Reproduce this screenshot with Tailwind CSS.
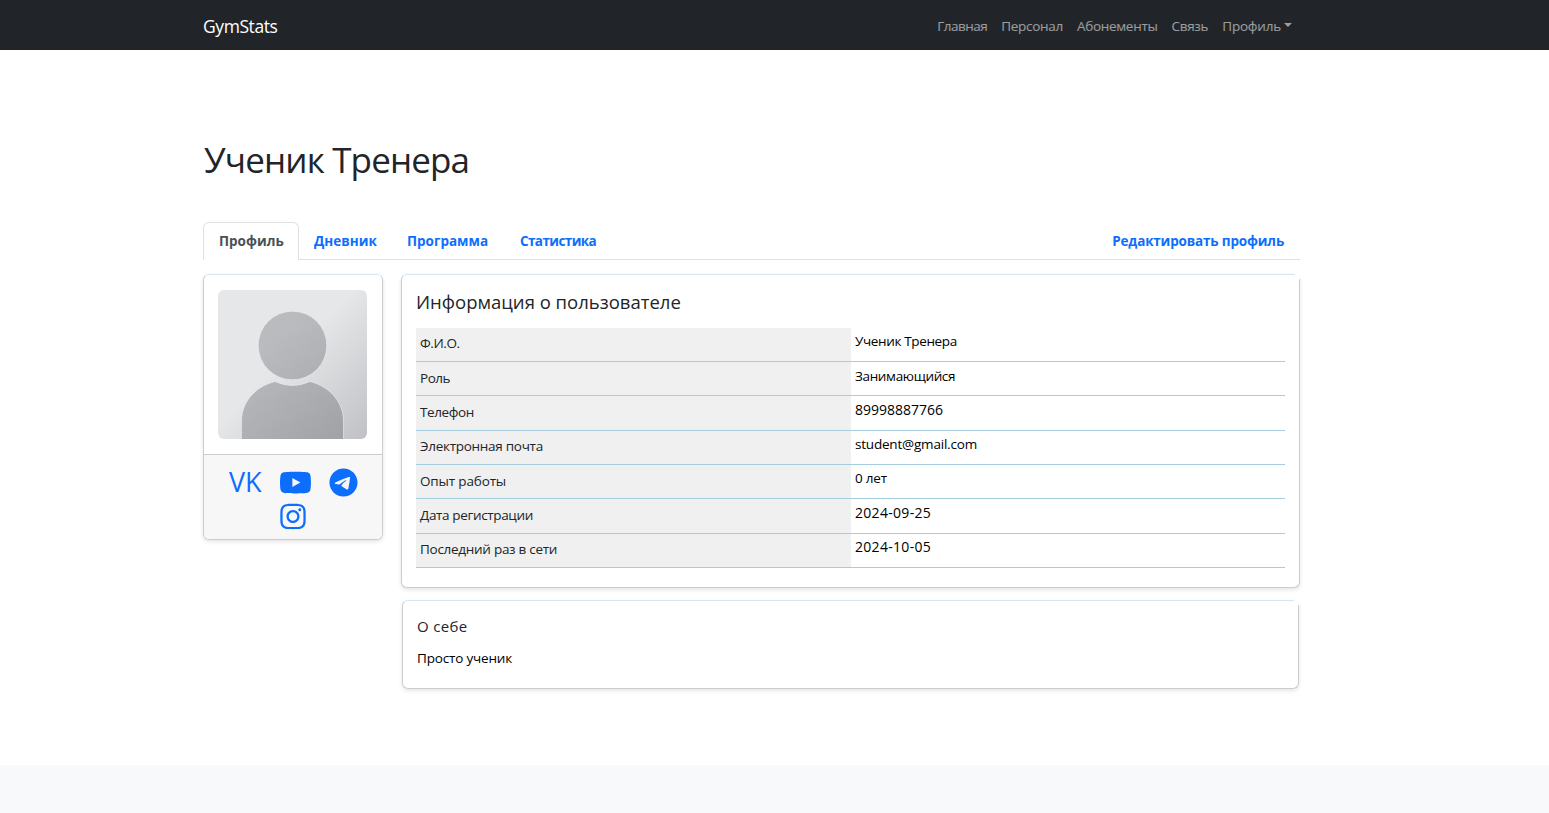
<!DOCTYPE html>
<html lang="ru">
<head>
<meta charset="utf-8">
<title>GymStats</title>
<script src="https://cdn.jsdelivr.net/npm/@tailwindcss/browser@4"></script>
</head>
<body class="flex h-[813px] flex-col overflow-hidden bg-white font-['Open_Sans','Noto_Sans',sans-serif] text-[13.5px] text-[#212529]">
<nav class="flex h-[50px] shrink-0 items-center justify-between bg-[#212529] pt-px pr-[257px] pl-[203px]">
  <a class="text-[17.5px] leading-6 tracking-[-0.42px] text-white">GymStats</a>
  <div class="flex items-center gap-[14px] leading-5 text-white/55">
    <a class="tracking-[-0.5px]">Главная</a><a class="tracking-[-0.3px]">Персонал</a><a class="tracking-[-0.3px]">Абонементы</a><a class="tracking-[-0.3px]">Связь</a>
    <a class="flex items-center gap-[3px]"><span class="tracking-[-0.2px]">Профиль</span><svg class="mb-0.5 h-1 w-2" viewBox="0 0 8 4" fill="currentColor"><path d="M0 0h8L4 4z"/></svg></a>
  </div>
</nav>
<main class="flex h-[715px] shrink-0 flex-col pr-[249px] pl-[203px]">
  <h1 class="mt-[86px] h-12 pl-px text-[35px] leading-12 tracking-[-0.85px]">Ученик Тренера</h1>
  <div class="mt-[38px] flex h-[38px] shrink-0 items-stretch border-b border-[#dee2e6] leading-[38px] font-bold text-[#0d6efd]">
    <div class="-mb-px w-24 rounded-t-md border border-b-0 border-[#dee2e6] bg-white pl-[15px] leading-[36px] text-[#495057]">Профиль</div>
    <a class="w-[93px] pl-[15px]">Дневник</a>
    <a class="w-[113px] pl-[15px]">Программа</a>
    <a class="w-[106px] pl-[15px] tracking-[-0.6px]">Статистика</a>
    <a class="ml-auto pr-4 tracking-[-0.17px]">Редактировать профиль</a>
  </div>
  <div class="mt-[14px] flex items-start justify-between">
    <aside class="relative flex h-[266px] w-[180px] flex-col overflow-hidden rounded-md border border-[#ccc] border-t-[#d3e6f1] shadow-[0_2px_4px_rgba(0,0,0,0.1)]">
      <div class="h-[179px] px-[14px] pt-[15px]">
        <svg class="size-[149px] rounded-md" viewBox="0 0 149 149">
          <defs>
            <linearGradient id="bg" x1="0" y1="0" x2="1" y2="1"><stop offset="0.45" stop-color="#e6e7e9"/><stop offset="1" stop-color="#c0c1c4"/></linearGradient>
            <linearGradient id="fg" gradientUnits="userSpaceOnUse" x1="30" y1="30" x2="130" y2="149"><stop offset="0.2" stop-color="#babbbf"/><stop offset="1" stop-color="#a0a1a5"/></linearGradient>
          </defs>
          <path fill="url(#bg)" d="M0 0h149v149H0z"/>
          <g fill="url(#fg)" stroke="#eeeff0" stroke-width="0.6"><circle cx="74.500" cy="55.500" r="34.300"/><path d="M23.500 150v-19c0-18 13-34.500 33.500-39.500q17.500 8 35 0C112.500 96.500 125.500 113 125.500 131v19z"/></g>
        </svg>
      </div>
      <div class="flex flex-1 flex-col border-t border-[#ccc] bg-[#f7f7f7] pt-[10px] text-[#0d6efd]">
        <div class="flex h-[34px] items-center pl-[25px]">
          <span class="w-[50px] text-[27px] leading-[36px] tracking-[-0.2px]">VK</span>
          <svg class="h-[29px] w-[33px]" viewBox="0 0 576 512" fill="currentColor"><path d="M549.655 124.083c-6.281-23.65-24.787-42.276-48.284-48.597C458.781 64 288 64 288 64S117.22 64 74.629 75.486c-23.497 6.322-42.003 24.947-48.284 48.597-11.412 42.867-11.412 132.305-11.412 132.305s0 89.438 11.412 132.305c6.281 23.65 24.787 41.500 48.284 47.821C117.22 448 288 448 288 448s170.780 0 213.371-11.486c23.497-6.321 42.003-24.171 48.284-47.821 11.412-42.867 11.412-132.305 11.412-132.305s0-89.438-11.412-132.305zm-317.510 213.508V175.185l142.739 81.205-142.739 81.201z"/></svg>
          <svg class="ml-[17px] h-[29px] w-[29px]" viewBox="0 0 496 512" fill="currentColor"><path d="M248 8C111.033 8 0 119.033 0 256S111.033 504 248 504 496 392.967 496 256 384.967 8 248 8ZM362.952 176.660c-3.732 39.215-19.881 134.378-28.100 178.300-3.476 18.584-10.322 24.816-16.948 25.425-14.400 1.326-25.338-9.517-39.287-18.661-21.827-14.308-34.158-23.215-55.346-37.177-24.485-16.135-8.612-25 5.342-39.500 3.652-3.793 67.107-61.510 68.335-66.746.153-.655.3-3.100-1.154-4.384s-3.590-.849-5.135-.5q-3.283.746-104.608 69.142-14.845 10.194-26.894 9.934c-8.855-.191-25.888-5.006-38.551-9.123-15.531-5.048-27.875-7.717-26.800-16.291q.84-6.700 18.450-13.700 108.446-47.248 144.628-62.300c68.872-28.647 83.183-33.623 92.511-33.789 2.052-.034 6.639.474 9.610 2.885a10.452 10.452 0 0 1 3.530 6.716A43.765 43.765 0 0 1 362.952 176.660Z"/></svg>
        </div>
        <svg class="mx-auto mt-[3px] h-[29px] w-[26px]" viewBox="0 0 448 512" fill="currentColor"><path d="M224.100 141c-63.600 0-114.900 51.300-114.900 114.900s51.300 114.900 114.900 114.900S339 319.500 339 255.900 287.700 141 224.100 141zm0 189.600c-41.100 0-74.700-33.500-74.700-74.700s33.500-74.700 74.700-74.700 74.700 33.500 74.700 74.700-33.600 74.700-74.700 74.700zm146.400-194.300c0 14.900-12 26.800-26.800 26.800-14.900 0-26.800-12-26.800-26.800s12-26.800 26.800-26.800 26.800 12 26.800 26.800zm76.100 27.200c-1.700-35.900-9.900-67.700-36.200-93.900-26.200-26.200-58-34.400-93.900-36.200-37-2.100-147.900-2.100-184.900 0-35.800 1.700-67.600 9.900-93.900 36.100s-34.400 58-36.200 93.900c-2.100 37-2.100 147.900 0 184.900 1.700 35.900 9.900 67.700 36.200 93.900s58 34.400 93.900 36.200c37 2.100 147.900 2.100 184.900 0 35.900-1.700 67.700-9.900 93.900-36.200 26.200-26.200 34.400-58 36.200-93.900 2.100-37 2.100-147.800 0-184.800zM398.800 388c-7.800 19.600-22.900 34.700-42.600 42.600-29.500 11.700-99.500 9-132.100 9s-102.700 2.600-132.100-9c-19.600-7.800-34.700-22.900-42.600-42.600-11.700-29.500-9-99.500-9-132.100s-2.600-102.700 9-132.100c7.800-19.600 22.900-34.700 42.600-42.600 29.500-11.700 99.500-9 132.100-9s102.700-2.600 132.100 9c19.600 7.800 34.700 22.900 42.600 42.600 11.700 29.500 9 99.500 9 132.100s2.700 102.700-9 132.100z"/></svg>
      </div>
      <i class="absolute -top-px -right-px size-[5px] bg-white"></i>
    </aside>
    <div class="flex w-[899px] flex-col">
      <section class="relative h-[314px] rounded-md border border-[#ccc] border-t-[#d3e6f1] px-[14px] shadow-[0_2px_4px_rgba(0,0,0,0.1)]">
        <h2 class="mt-[14px] h-[26px] text-[18.5px] leading-[26px]">Информация о пользователе</h2>
        <dl class="mt-[13px] grid grid-cols-[435px_1fr] grid-rows-[34px_34px_35px_34px_34px_35px_34px] leading-5 [&>dd]:border-b [&>dd]:border-[#a5cde0] [&>dd]:pl-1 [&>dd]:text-black [&>dt]:border-b [&>dt]:border-[#a5cde0] [&>dt]:bg-[#f0f0f0] [&>dt]:pl-1">
          <dt class="pt-[5px] tracking-[-0.4px]">Ф.И.О.</dt><dd class="pt-[3px] tracking-[-0.36px]">Ученик Тренера</dd>
          <dt class="pt-[6px] tracking-[-0.45px]">Роль</dt><dd class="pt-[4px] tracking-[-0.35px]">Занимающийся</dd>
          <dt class="pt-[6px] tracking-[-0.4px]">Телефон</dt><dd class="pt-[4px] text-[14px]">89998887766</dd>
          <dt class="pt-[5px] tracking-[-0.28px]">Электронная почта</dt><dd class="pt-[3px] tracking-[-0.2px]">student@gmail.com</dd>
          <dt class="pt-[6px] tracking-[-0.15px]">Опыт работы</dt><dd class="pt-[3px] tracking-[-0.2px]">0 лет</dd>
          <dt class="pt-[6px] tracking-[-0.35px]">Дата регистрации</dt><dd class="pt-[4px] text-[14px] tracking-[0.3px]">2024-09-25</dd>
          <dt class="pt-[5px] tracking-[-0.28px]">Последний раз в сети</dt><dd class="pt-[3px] text-[14px] tracking-[0.3px]">2024-10-05</dd>
        </dl>
        <i class="absolute -top-px -right-px size-[5px] bg-white"></i>
      </section>
      <section class="relative mx-px mt-3 h-[89px] rounded-md border border-[#ccc] border-t-[#d3e6f1] px-[14px] pt-[13px] shadow-[0_2px_4px_rgba(0,0,0,0.1)]">
        <h3 class="text-[15px] leading-6 tracking-[0.35px]">О себе</h3>
        <p class="mt-[10px] leading-5 tracking-[-0.18px] text-black">Просто ученик</p>
        <i class="absolute -top-px -right-px size-[5px] bg-white"></i>
      </section>
    </div>
  </div>
</main>
<footer class="flex-1 bg-[#f8f9fa]"></footer>
</body>
</html>
